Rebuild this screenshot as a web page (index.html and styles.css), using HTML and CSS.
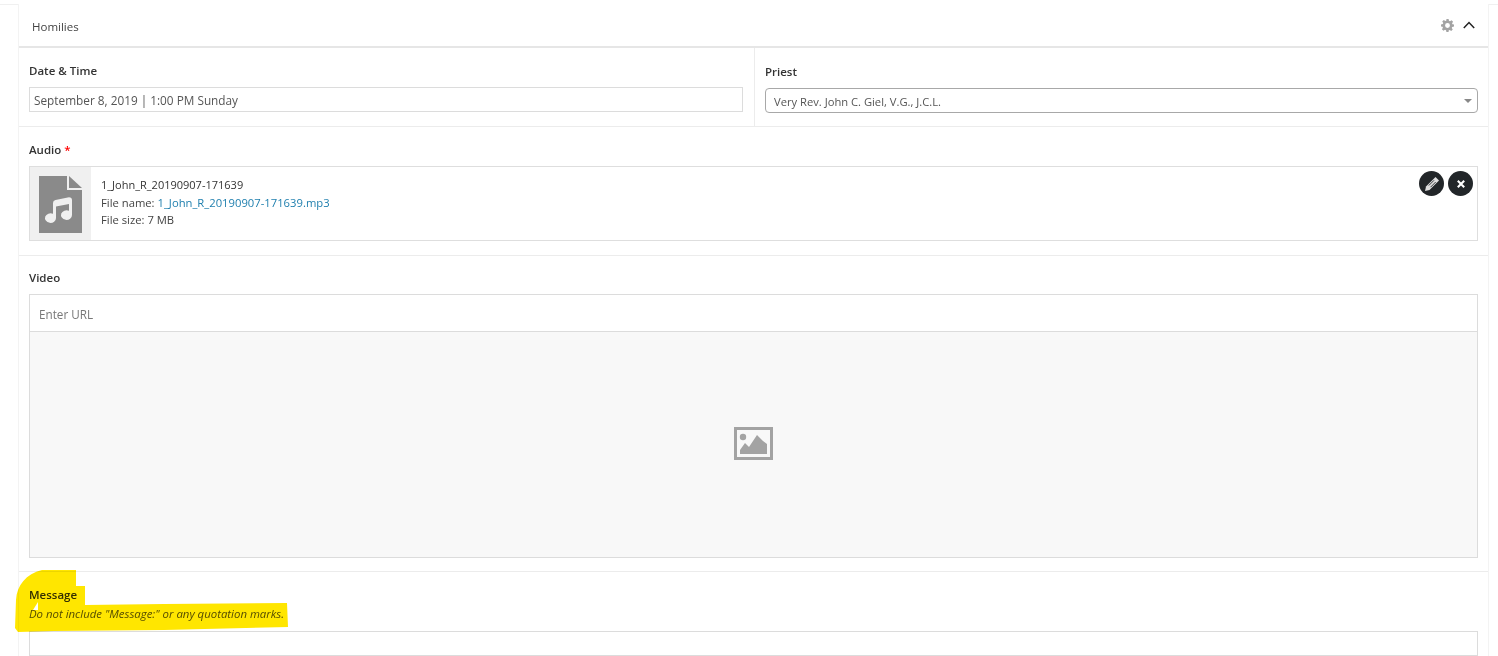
FILE: index.html
```html
<!DOCTYPE html>
<html lang="en">
<head>
<meta charset="utf-8">
<title>Homilies</title>
<link rel="stylesheet" href="styles.css">
</head>
<body>
<div class="page">
<main class="panel">
  <header class="panel-head">
    <h2 class="panel-title">Homilies</h2>
    <div class="head-tools">
      <svg class="gear" viewBox="0 0 24 24" width="13" height="13"><path fill="#a3a3a3" fill-rule="evenodd" d="M10 0h4l.7 3.400 1.900.8 2.900-1.900 2.800 2.800-1.900 2.900.8 1.900L24 10v4l-3.400.7-.8 1.900 1.900 2.900-2.800 2.800-2.900-1.900-1.900.8L14 24h-4l-.7-3.400-1.900-.8-2.900 1.900-2.800-2.800 1.900-2.900-.8-1.900L0 14v-4l3.400-.7.8-1.900-1.900-2.900 2.800-2.800 2.900 1.900 1.900-.8zM12 7.500a4.500 4.500 0 1 0 0 9 4.500 4.500 0 0 0 0-9z"/></svg>
      <svg class="chev" viewBox="0 0 12 8" width="12" height="8"><path fill="none" stroke="#222" stroke-width="1.500" d="M.8 7 6 1.500 11.200 7"/></svg>
    </div>
  </header>

  <section class="row split">
    <div class="cell date-cell">
      <label class="label">Date &amp; Time</label>
      <div class="input">September 8, 2019 | 1:00 PM Sunday</div>
    </div>
    <div class="cell priest-cell">
      <label class="label">Priest</label>
      <div class="select">Very Rev. John C. Giel, V.G., J.C.L.<span class="caret"></span></div>
    </div>
  </section>

  <section class="row audio-row">
    <label class="label">Audio <span class="req">*</span></label>
    <div class="file">
      <div class="file-thumb">
        <svg viewBox="0 0 43 57" width="43" height="57"><path fill="#8a8a8a" fill-rule="evenodd" d="M0 0h28v14h15v43H0zM14 27v10.800a5.500 4.800 0 1 0 3 4.200V30.500L30 28v6.800a5.500 4.800 0 1 0 3 4.200V24.200a3 3 0 0 0-3-3L16.500 24a3 3 0 0 0-2.500 3z"/><path fill="#8a8a8a" d="M30 0l13 12H30z"/></svg>
      </div>
      <div class="file-info">
        <div class="file-title">1_John_R_20190907-171639</div>
        <div>File name: <a class="link">1_John_R_20190907-171639.mp3</a></div>
        <div>File size: 7 MB</div>
      </div>
      <div class="file-actions">
        <button class="round"><svg viewBox="0 0 16 16" width="16" height="16"><path fill="#dedede" d="M11.500 1 15 4.500 5.500 14 1 15l1-4.500z"/><path stroke="#222629" stroke-width=".9" d="M10 4.300 4.800 9.500M11.700 6 6.500 11.200"/></svg></button>
        <button class="round"><svg viewBox="0 0 10 10" width="8" height="8"><path stroke="#fff" stroke-width="2.600" d="M1 1l8 8M9 1 1 9"/></svg></button>
      </div>
    </div>
  </section>

  <section class="row video-row">
    <label class="label">Video</label>
    <div class="video">
      <div class="url">Enter URL</div>
      <div class="preview">
        <svg viewBox="0 0 39 33" width="39" height="33"><path fill="#a3a3a3" fill-rule="evenodd" d="M0 0h39v33H0zM3 3v27h33V3z"/><circle cx="9" cy="10" r="3.200" fill="#a3a3a3"/><path fill="#a3a3a3" d="M6 27v-4l5-7 4 4 8-12 6 6 4 3v10z"/></svg>
      </div>
    </div>
  </section>

  <section class="row message-row">
    <label class="label">Message</label>
    <p class="hint">Do not include "Message:" or any quotation marks.</p>
    <div class="input message-input"></div>
  </section>
</main>
</div>
<svg class="marker" viewBox="0 0 276 63" width="276" height="63"><path fill="#ffe600" fill-rule="evenodd" d="M28 0H62V16H71V35L150 34 273 33 274 57 150 60 40 61 4 62 1 58 2 30C3 15 12 4 28 0zM24 32 19 40H24z"/></svg>
</body>
</html>
```

FILE: styles.css
```css
* { box-sizing: border-box; }
html, body { margin: 0; height: 656px; overflow: hidden; background: #fff; }
body {
  position: relative;
  font-family: "Open Sans", "Noto Sans", sans-serif;
  font-size: 11.700px;
  color: #444;
  padding-top: 4px;
}
.page { border-top: 1px solid #f0f0f0; }
.panel {
  width: 1471px;
  margin-left: 18px;
  margin-top: -1px;
  background: #fff;
  border-left: 1px solid #f3f3f3;
  border-right: 1px solid #f3f3f3;
  height: 652px;
  position: relative;
}
.panel-head {
  height: 44px;
  display: flex;
  align-items: center;
  justify-content: space-between;
  padding: 0 13px 0 13px;
  border-bottom: 2px solid #e6e6e6;
}
.panel-title { margin: 0; padding-top: 2px; font-size: 11.500px; font-weight: 400; color: #444; }
.head-tools { display: flex; align-items: center; gap: 9px; }
.gear { display: block; }
.chev { display: block; }
.row { border-bottom: 1px solid #ececec; }
.split { display: flex; height: 79px; }
.cell { padding: 16px 10px 0; }
.date-cell { width: 736px; border-right: 1px solid #ececec; padding-right: 11px; }
.priest-cell { flex: 1; padding-top: 17px; }
.label { display: block; font-size: 11.500px; font-weight: 600; color: #333; line-height: 14px; margin-bottom: 9px; }
.req { color: #f00; }
.input {
  height: 25px;
  border: 1px solid #dcdcdc;
  padding: 0 4px;
  line-height: 25px;
  font-size: 11.800px;
  color: #555;
}
.select {
  position: relative;
  height: 25px;
  border: 1px solid #a8a8a8;
  border-radius: 4px;
  padding: 0 8px;
  line-height: 25px;
  font-size: 11.200px;
  color: #555;
}
.caret {
  position: absolute;
  right: 5px;
  top: 10px;
  border: 4px solid transparent;
  border-top: 4px solid #888;
  border-bottom: 0;
}
.audio-row { height: 129px; padding: 16px 10px 0; }
.file {
  display: flex;
  height: 75px;
  border: 1px solid #dedede;
  position: relative;
}
.file-thumb {
  width: 61px;
  background: #f0f0f0;
  display: flex;
  align-items: center;
  justify-content: center;
  flex: none;
  padding-top: 1px;
}
.file-info { padding: 9px 9px 0 10px; font-size: 11.250px; line-height: 17.500px; color: #444; }
.file-title { font-size: 11px; color: #333; }
.link { color: #1f7fae; }
.file-actions { position: absolute; right: 4px; top: 4px; display: flex; gap: 4px; }
.round {
  width: 25px;
  height: 25px;
  border-radius: 50%;
  border: 0;
  padding: 0;
  background: #222629;
  display: flex;
  align-items: center;
  justify-content: center;
}
.round svg { display: block; }
.video-row { height: 316px; padding: 15px 10px 0; }
.video-row .label { margin-bottom: 9px; }
.video { border: 1px solid #dcdcdc; height: 264px; display: flex; flex-direction: column; }
.url { height: 37px; padding: 0 9px; line-height: 39px; color: #777; border-bottom: 1px solid #dcdcdc; }
.preview { flex: 1; background: #f8f8f8; display: flex; align-items: center; justify-content: center; padding-bottom: 2px; }
.message-row { border-bottom: 0; padding: 16px 10px 0; }
.message-row .label { margin-bottom: 5px; }
.hint { margin: 0 0 10px; font-size: 11.400px; line-height: 14px; font-style: italic; color: #555; }
.message-input { height: 25px; }
.marker {
  position: absolute;
  left: 14px;
  top: 570px;
  mix-blend-mode: multiply;
}
```
